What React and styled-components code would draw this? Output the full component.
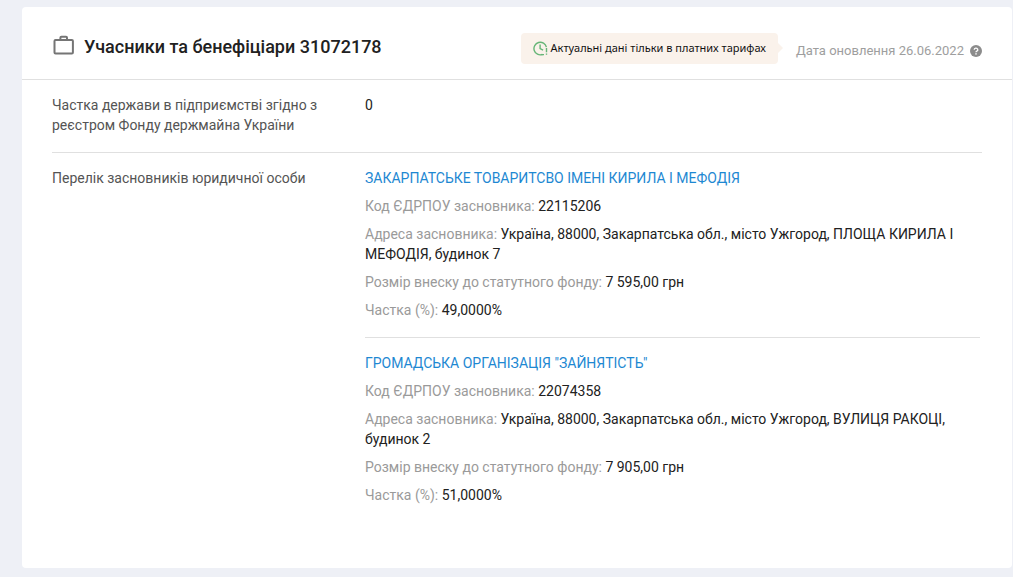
import React from 'react'
import styled, { createGlobalStyle } from 'styled-components'

const GlobalStyle = createGlobalStyle`
    * {
        box-sizing: border-box;
    }
    body {
        margin: 0;
        background-color: #eef0f6;
        font-family: Roboto, "Liberation Sans", sans-serif;
        font-size: 14px;
        line-height: 20px;
        color: #212121;
    }
`;

const Page = styled.main`
    padding: 7px 1px 9px 22px;
`;

const Card = styled.section`
    background-color: #fff;
    border-radius: 4px;
    padding-bottom: 46px;
`;

const Header = styled.header`
    display: flex;
    align-items: center;
    gap: 18px;
    min-height: 73px;
    padding: 10px 30px 0 30px;
    border-bottom: 1px solid #e0e0e0;
`;

const Title = styled.h2`
    flex: 1;
    display: flex;
    align-items: center;
    gap: 8px;
    margin: 0;
    padding-bottom: 3px;
    font-size: 18px;
    line-height: 24px;
    font-weight: 500;
    white-space: nowrap;
`;

const Badge = styled.div`
    position: relative;
    display: flex;
    align-items: center;
    gap: 3px;
    height: 31px;
    padding: 0 12px;
    border-radius: 4px;
    background-color: #faf2eb;
    color: #111;
    font-family: "Noto Sans", sans-serif;
    font-size: 11px;
    font-weight: 400;
    white-space: nowrap;
    &::after {
        content: '';
        position: absolute;
        left: 100%;
        top: 10px;
        border: 5px solid transparent;
        border-left-color: #faf2eb;
        border-right-width: 0;
    }
`;

const Updated = styled.div`
    display: flex;
    align-items: center;
    gap: 6px;
    padding-top: 6px;
    font-size: 13px;
    color: #9e9e9e;
    white-space: nowrap;
`;

const HelpButton = styled.button`
    display: flex;
    padding: 0;
    border: 0;
    background: none;
    cursor: pointer;
`;

const Rows = styled.dl`
    margin: 0;
    padding: 0 30px;
`;

const Row = styled.div`
    display: grid;
    grid-template-columns: 313px 1fr;
    padding: 15px 0 17px;
    & + & {
        border-top: 1px solid #e0e0e0;
    }
`;

const Term = styled.dt`
    padding-right: 40px;
    color: #545454;
`;

const Value = styled.dd`
    margin: 0;
`;

const Founder = styled.article`
    display: flex;
    flex-direction: column;
    align-items: flex-start;
    gap: 8px;
    margin-right: 2px;
    & + & {
        margin-top: 17px;
        padding-top: 15px;
        border-top: 1px solid #e0e0e0;
    }
`;

const FounderLink = styled.a`
    color: #1e88d2;
    text-decoration: none;
    &:hover {
        text-decoration: underline;
    }
`;

const Field = styled.div``;

const FieldName = styled.span`
    color: #9a9a9a;
`;

const founders = [
    {
        name: 'ЗАКАРПАТСЬКЕ ТОВАРИТСВО ІМЕНІ КИРИЛА І МЕФОДІЯ',
        fields: [
            ['Код ЄДРПОУ засновника:', '22115206'],
            ['Адреса засновника:', 'Україна, 88000, Закарпатська обл., місто Ужгород, ПЛОЩА КИРИЛА І МЕФОДІЯ, будинок 7'],
            ['Розмір внеску до статутного фонду:', '7 595,00 грн'],
            ['Частка (%):', '49,0000%'],
        ],
    },
    {
        name: 'ГРОМАДСЬКА ОРГАНІЗАЦІЯ "ЗАЙНЯТІСТЬ"',
        fields: [
            ['Код ЄДРПОУ засновника:', '22074358'],
            ['Адреса засновника:', 'Україна, 88000, Закарпатська обл., місто Ужгород, ВУЛИЦЯ РАКОЦІ, будинок 2'],
            ['Розмір внеску до статутного фонду:', '7 905,00 грн'],
            ['Частка (%):', '51,0000%'],
        ],
    },
]

const BriefcaseIcon = () => (
    <svg width="24" height="24" viewBox="0 0 24 24" fill="none" stroke="#757575" strokeWidth="2" aria-hidden="true">
        <rect x="2.5" y="5" width="18.4" height="13.6" rx="1" />
        <path d="M8.4 5V2.8a1 1 0 0 1 1-1h4.6a1 1 0 0 1 1 1V5" />
    </svg>
)

const ClockIcon = () => (
    <svg width="15" height="15" viewBox="0 0 15 15" fill="none" stroke="#66b577" strokeWidth="1.4" aria-hidden="true">
        <path d="M9.4 13.5A6.3 6.3 0 1 1 13.4 6.2" />
        <path d="M7.1 3.6v4l3 1.5" />
        <path d="M13.5 7v4.2M13.5 12.4v1.4M9 13.6h2" />
    </svg>
)

const HelpIcon = () => (
    <svg width="12" height="12" viewBox="0 0 12 12" aria-hidden="true">
        <circle cx="6" cy="6" r="6" fill="#8c8c8c" />
        <path d="M4.2 4.7a1.8 1.6 0 1 1 2.6 1.4c-.6.3-.8.5-.8 1.2" fill="none" stroke="#fff" strokeWidth="1.3" />
        <rect x="5.3" y="8.2" width="1.4" height="1.4" fill="#fff" />
    </svg>
)

const FounderCard = ({ founder }) => {
    return (
        <Founder>
            <FounderLink href="#">{founder.name}</FounderLink>
            {founder.fields.map(([name, value]) => (
                <Field key={name}>
                    <FieldName>{name}</FieldName> {value}
                </Field>
            ))}
        </Founder>
    )
}

const App = () => {
    return (
        <>
            <GlobalStyle />
            <Page>
                <Card>
                    <Header>
                        <Title>
                            <BriefcaseIcon />
                            Учасники та бенефіціари 31072178
                        </Title>
                        <Badge>
                            <ClockIcon />
                            Актуальні дані тільки в платних тарифах
                        </Badge>
                        <Updated>
                            Дата оновлення 26.06.2022
                            <HelpButton type="button" aria-label="Довідка">
                                <HelpIcon />
                            </HelpButton>
                        </Updated>
                    </Header>
                    <Rows>
                        <Row>
                            <Term>Частка держави в підприємстві згідно з реєстром Фонду держмайна України</Term>
                            <Value>0</Value>
                        </Row>
                        <Row>
                            <Term>Перелік засновників юридичної особи</Term>
                            <Value>
                                {founders.map((founder) => (
                                    <FounderCard key={founder.name} founder={founder} />
                                ))}
                            </Value>
                        </Row>
                    </Rows>
                </Card>
            </Page>
        </>
    )
}

export default App
